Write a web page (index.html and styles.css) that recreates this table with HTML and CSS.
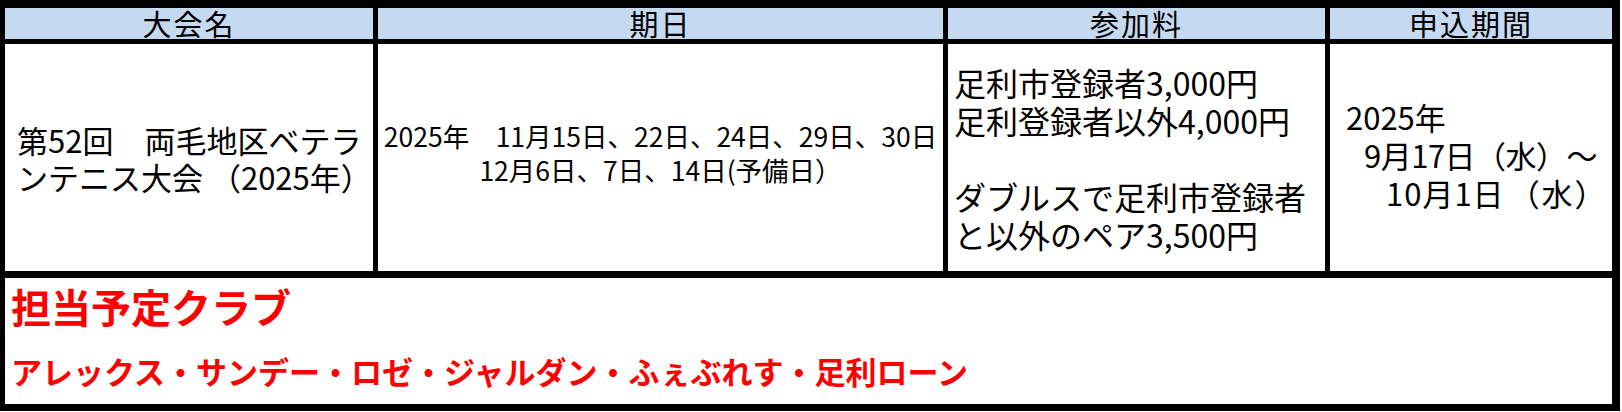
FILE: index.html
```html
<!DOCTYPE html>
<html lang="ja">
<head>
<meta charset="utf-8">
<title>大会案内</title>
<link rel="stylesheet" href="styles.css">
</head>
<body>
<div class="sheet">
  <div class="grid">
    <div class="hd">大会名</div>
    <div class="hd">期日</div>
    <div class="hd">参加料</div>
    <div class="hd">申込期間</div>

    <div class="cell c1"><p>第52回　両毛地区ベテラ<br>ンテニス大会 （2025年）</p></div>
    <div class="cell c2"><p>2025年　11月15日、22日、24日、29日、30日<br>12月6日、7日、14日(予備日）</p></div>
    <div class="cell c3"><p>足利市登録者3,000円<br>足利登録者以外4,000円<br><br>ダブルスで足利市登録者<br>と以外のペア3,500円</p></div>
    <div class="cell c4">
      <span class="ln ln1">2025年</span>
      <span class="ln ln2">9月17日（水）～</span>
      <span class="ln ln3">10月1日<span class="wd">（水）</span></span>
    </div>

    <div class="clubs">
      <div class="clubs-title">担当予定クラブ</div>
      <div class="clubs-list">アレックス・サンデー・ロゼ・ジャルダン・ふぇぶれす・足利ローン</div>
    </div>
  </div>
</div>
</body>
</html>
```

FILE: styles.css
```css
html, body {
  margin: 0;
  padding: 0;
  background: #ffffff;
}

body {
  font-family: "Noto Sans CJK JP", "Noto Sans", sans-serif;
  color: #000000;
}

.sheet {
  width: 1620px;
  height: 411px;
  box-sizing: border-box;
  background: #000000;
  padding: 8px 8px 7px 5px;
}

.grid {
  display: grid;
  grid-template-columns: 368px 565px 377px 282px;
  grid-template-rows: 31px 227px 128px;
  column-gap: 5px;
  row-gap: 5px;
  height: 100%;
}

.hd {
  background: #c5d9f1;
  display: flex;
  align-items: center;
  justify-content: center;
  font-size: 29px;
  line-height: 31px;
  letter-spacing: 2px;
}

.cell {
  background: #ffffff;
  display: flex;
  align-items: center;
  box-sizing: border-box;
}

.cell p {
  margin: 0;
}

.c1 {
  font-size: 31px;
  line-height: 37px;
  padding: 0 0 0 12px;
}

.c2 {
  font-size: 26.5px;
  line-height: 34px;
  justify-content: center;
  text-align: center;
  padding-bottom: 9px;
  white-space: nowrap;
}

.c3 {
  font-size: 32px;
  line-height: 38px;
  padding: 0 0 0 6px;
  white-space: nowrap;
}

.c4 {
  flex-direction: column;
  align-items: flex-start;
  justify-content: center;
  font-size: 31px;
  line-height: 38px;
  padding-bottom: 6px;
  white-space: nowrap;
}

.ln {
  display: block;
}

.ln1 { padding-left: 16px; }
.ln2 { padding-left: 34px; letter-spacing: -0.5px; }
.ln3 { padding-left: 56px; letter-spacing: 1px; }
.wd { letter-spacing: 2px; margin-left: 4px; }

.clubs {
  grid-column: 1 / -1;
  margin-top: 2px;
  background: #ffffff;
  color: #ff0000;
  font-weight: 700;
  padding: 4px 0 0 6px;
  display: flex;
  flex-direction: column;
}

.clubs-title {
  font-size: 40px;
  line-height: 48px;
}

.clubs-list {
  font-size: 31px;
  line-height: 40px;
  margin-top: 21px;
  white-space: nowrap;
}
```
